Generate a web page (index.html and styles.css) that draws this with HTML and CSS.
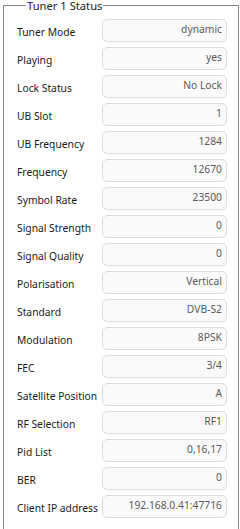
FILE: index.html
```html
<!DOCTYPE html>
<html>
<head>
<meta charset="utf-8">
<link rel="stylesheet" href="styles.css">
</head>
<body>
<fieldset class="panel">
  <legend class="panel-title">Tuner 1 Status</legend>
  <div class="rows">
    <div class="row"><span class="label">Tuner Mode</span><span class="value">dynamic</span></div>
    <div class="row"><span class="label">Playing</span><span class="value">yes</span></div>
    <div class="row"><span class="label">Lock Status</span><span class="value">No Lock</span></div>
    <div class="row"><span class="label">UB Slot</span><span class="value">1</span></div>
    <div class="row"><span class="label">UB Frequency</span><span class="value">1284</span></div>
    <div class="row"><span class="label">Frequency</span><span class="value">12670</span></div>
    <div class="row"><span class="label">Symbol Rate</span><span class="value">23500</span></div>
    <div class="row"><span class="label">Signal Strength</span><span class="value">0</span></div>
    <div class="row"><span class="label">Signal Quality</span><span class="value">0</span></div>
    <div class="row"><span class="label">Polarisation</span><span class="value">Vertical</span></div>
    <div class="row"><span class="label">Standard</span><span class="value">DVB-S2</span></div>
    <div class="row"><span class="label">Modulation</span><span class="value">8PSK</span></div>
    <div class="row"><span class="label">FEC</span><span class="value">3/4</span></div>
    <div class="row"><span class="label">Satellite Position</span><span class="value">A</span></div>
    <div class="row"><span class="label">RF Selection</span><span class="value">RF1</span></div>
    <div class="row"><span class="label">Pid List</span><span class="value">0,16,17</span></div>
    <div class="row"><span class="label">BER</span><span class="value">0</span></div>
    <div class="row"><span class="label">Client IP address</span><span class="value">192.168.0.41:47716</span></div>
  </div>
</fieldset>
</body>
</html>
```
FILE: styles.css
```css
html, body {
  margin: 0;
  padding: 0;
  background: #ffffff;
}
body {
  font-family: "Noto Sans", "DejaVu Sans", sans-serif;
  font-size: 10.3px;
  color: #111;
  overflow: hidden;
}
.panel {
  margin: 0 0 0 3px;
  width: 236px;
  box-sizing: border-box;
  height: 560px;
  border: 1px solid #8a8a8a;
  border-radius: 0;
  padding: 8px 10px 0 13px;
}
.panel-title {
  font-size: 11.2px;
  padding: 0 1px;
  margin-left: 9px;
  color: #222;
  line-height: 11px;
}
.rows {
  display: flex;
  flex-direction: column;
  gap: 5px;
}
.row {
  display: grid;
  grid-template-columns: 85px 125px;
  align-items: center;
}
.label {
  color: #1a1a1a;
  white-space: nowrap;
  padding-top: 2px;
}
.value {
  height: 21px;
  border: 1px solid #dcdcdc;
  border-radius: 5px;
  background: #fafafa;
  color: #5a5a5a;
  text-align: right;
  padding: 0 4px 0 0;
  line-height: 19px;
  white-space: nowrap;
}
```
